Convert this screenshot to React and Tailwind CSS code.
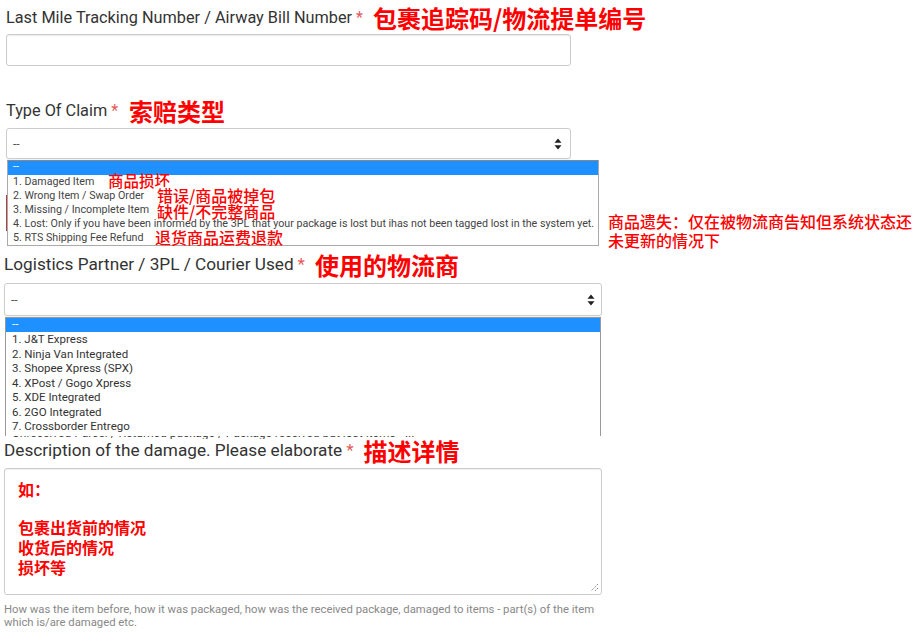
const Arrows = () => (
  <svg width="8" height="12" viewBox="0 0 8 12">
    <path d="M4 0.5 L7.5 4.8 H0.5 Z M4 11.5 L7.5 7.2 H0.5 Z" fill="#222" />
  </svg>
);

export default function App() {
  const cjk = "font-['Noto_Sans_CJK_SC',sans-serif]";
  return (
    <div className="relative w-[918px] h-[633px] overflow-hidden bg-white font-[Roboto,'Noto_Sans_CJK_SC',sans-serif] text-[#333]">
      {/* Section 1 */}
      <div className="pl-[6px] pt-[4px]">
        <div className="flex items-center h-[28px] whitespace-nowrap">
          <span className="text-[16.3px]">Last Mile Tracking Number / Airway Bill Number</span>
          <span className="ml-[4px] text-[16px] text-[#e25b5b]">*</span>
          <span className={`ml-[10px] text-[24px] font-bold text-[#ff0000] leading-none ${cjk}`}>包裹追踪码/物流提单编号</span>
        </div>
        <div className="mt-[2px] w-[565px] h-[32px] border border-[#ccc] rounded-[3px] shadow-[inset_0_1px_1px_rgba(0,0,0,0.08)]" />
      </div>

      {/* Section 2 */}
      <div className="pl-[6px] mt-[31px]">
        <div className="flex items-center h-[28px] whitespace-nowrap">
          <span className="text-[16.3px]">Type Of Claim</span>
          <span className="ml-[4px] text-[16px] text-[#e25b5b]">*</span>
          <span className={`ml-[11px] text-[24px] font-bold text-[#ff0000] leading-none ${cjk}`}>索赔类型</span>
        </div>
        <div className="mt-[3px] w-[565px] h-[31px] border border-[#ccc] rounded-[3px] flex items-center justify-between pl-[6px] pr-[8px] shadow-[0_1px_1px_rgba(0,0,0,0.06)]">
          <span className="text-[12px] text-[#555]">--</span>
          <Arrows />
        </div>
        <div className="relative ml-[1px] mt-[1px] w-[592px] border border-[#aaa] border-t-[#888] bg-white text-[10.7px] text-[#444] whitespace-nowrap">
          <div className="h-[14px] bg-[#1e90ff] text-white pl-[5px] leading-[12px]">--</div>
          <div className="h-[14px] leading-[14px] pl-[5px]">1. Damaged Item</div>
          <div className="h-[14px] leading-[14px] pl-[5px]">2. Wrong Item / Swap Order</div>
          <div className="h-[14px] leading-[14px] pl-[5px]">3. Missing / Incomplete Item</div>
          <div className="h-[14px] leading-[14px] pl-[5px]">4. Lost: Only if you have been informed by the 3PL that your package is lost but ihas not been tagged lost in the system yet.</div>
          <div className="h-[14px] leading-[14px] pl-[5px]">5. RTS Shipping Fee Refund</div>
          <span className={`absolute left-[100px] top-[12px] text-[15.5px] leading-none font-medium text-[#ff0000] ${cjk}`}>商品损坏</span>
          <span className={`absolute left-[149px] top-[26px] text-[16px] leading-none font-medium text-[#ff0000] bg-white ${cjk}`}>错误/商品被掉包</span>
          <span className={`absolute left-[149px] top-[42px] text-[16px] leading-none font-medium text-[#ff0000] ${cjk}`}>缺件/不完整商品</span>
          <span className={`absolute left-[147px] top-[68px] text-[16px] leading-none font-medium text-[#ff0000] ${cjk}`}>退货商品运费退款</span>
        </div>
      </div>
      <div className="absolute left-[6px] top-[195px] w-[1px] h-[36px] bg-[#b04040]" />
      <div className={`absolute left-[608px] top-[212px] w-[310px] text-[16px] leading-[19px] font-medium text-[#ff0000] ${cjk}`}>
        <div>商品遗失：仅在被物流商告知但系统状态还</div>
        <div>未更新的情况下</div>
      </div>

      {/* Section 3 */}
      <div className="pl-[4px] mt-[5px]">
        <div className="flex items-center h-[28px] whitespace-nowrap">
          <span className="text-[17.2px]">Logistics Partner / 3PL / Courier Used</span>
          <span className="ml-[4px] text-[17px] text-[#e25b5b]">*</span>
          <span className={`ml-[10px] text-[24px] font-bold text-[#ff0000] leading-none ${cjk}`}>使用的物流商</span>
        </div>
        <div className="mt-[4px] w-[598px] h-[33px] border border-[#ccc] rounded-[3px] flex items-center justify-between pl-[6px] pr-[6px] shadow-[0_1px_1px_rgba(0,0,0,0.06)]">
          <span className="text-[12px] text-[#555]">--</span>
          <Arrows />
        </div>
        <div className="ml-[1px] mt-[1px] w-[596px] h-[119px] overflow-hidden border-x border-t border-[#999] bg-white text-[11.5px] text-[#333] whitespace-nowrap">
          <div className="h-[14px] bg-[#1e90ff] text-white pl-[6px] leading-[12px]">--</div>
          <div className="h-[14.5px] leading-[14.5px] pl-[6px]">1. J&amp;T Express</div>
          <div className="h-[14.5px] leading-[14.5px] pl-[6px]">2. Ninja Van Integrated</div>
          <div className="h-[14.5px] leading-[14.5px] pl-[6px]">3. Shopee Xpress (SPX)</div>
          <div className="h-[14.5px] leading-[14.5px] pl-[6px]">4. XPost / Gogo Xpress</div>
          <div className="h-[14.5px] leading-[14.5px] pl-[6px]">5. XDE Integrated</div>
          <div className="h-[14.5px] leading-[14.5px] pl-[6px]">6. 2GO Integrated</div>
          <div className="h-[14.5px] leading-[14.5px] pl-[6px]">7. Crossborder Entrego</div>
        </div>
        <div className="h-[3px] overflow-hidden w-[598px]">
          <div className="-mt-[9px] pl-[8px] text-[12px] leading-[12px] text-[#444] whitespace-nowrap">Unreceived Parcel / Returned package / Package received but lost items - ...</div>
        </div>
      </div>

      {/* Section 4 */}
      <div className="pl-[4px] mt-[-2px]">
        <div className="flex items-center h-[28px] whitespace-nowrap">
          <span className="text-[17.2px]">Description of the damage. Please elaborate</span>
          <span className="ml-[4px] text-[17px] text-[#e25b5b]">*</span>
          <span className={`ml-[10px] text-[24px] font-bold text-[#ff0000] leading-none ${cjk}`}>描述详情</span>
        </div>
        <div className="relative mt-[3px] w-[598px] h-[127px] border border-[#ccc] rounded-[3px] pl-[13px] pt-[10px] shadow-[inset_0_1px_1px_rgba(0,0,0,0.06)]">
          <div className={`text-[16px] leading-[20px] font-bold text-[#ff0000] ${cjk}`}>
            <div>如：</div>
            <div className="h-[18px]" />
            <div>包裹出货前的情况</div>
            <div>收货后的情况</div>
            <div>损坏等</div>
          </div>
          <svg className="absolute right-[2px] bottom-[2px]" width="10" height="10" viewBox="0 0 10 10">
            <path d="M9 2 L2 9 M9 6 L6 9" stroke="#888" strokeWidth="1" strokeDasharray="1.5 1" />
          </svg>
        </div>
        <div className="mt-[9px] w-[600px] text-[11.3px] leading-[12.5px] text-[#888]">
          How was the item before, how it was packaged, how was the received package, damaged to items - part(s) of the item which is/are damaged etc.
        </div>
      </div>
    </div>
  );
}
